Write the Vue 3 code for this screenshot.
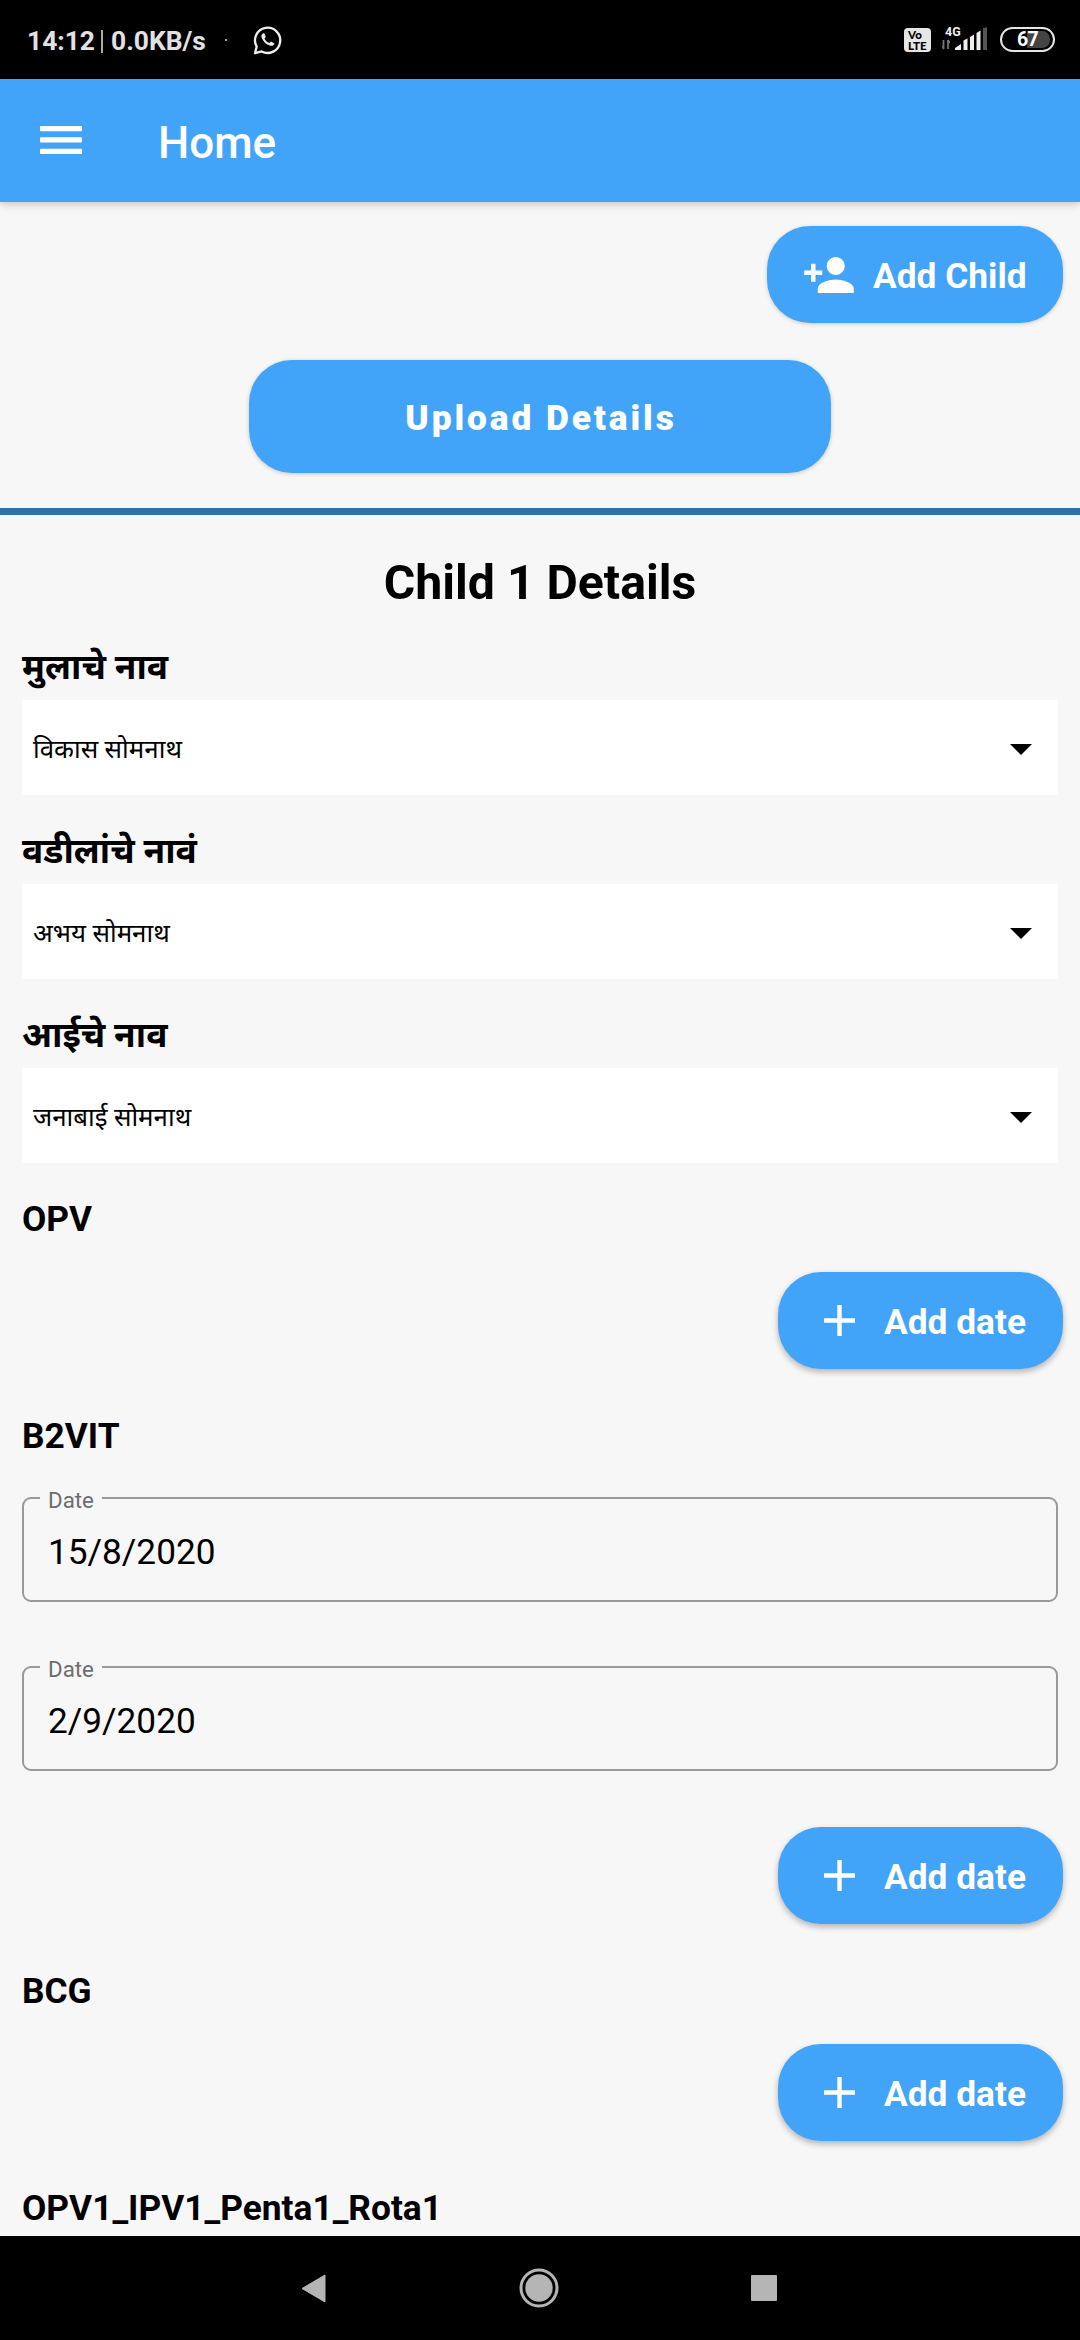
<script setup>
const names = [
  { label: 'मुलाचे नाव', value: 'विकास सोमनाथ' },
  { label: 'वडीलांचे नावं', value: 'अभय सोमनाथ' },
  { label: 'आईचे नाव', value: 'जनाबाई सोमनाथ' },
]
const vaccines = [
  { name: 'OPV', dates: [] },
  { name: 'B2VIT', dates: ['15/8/2020', '2/9/2020'] },
  { name: 'BCG', dates: [] },
]
</script>

<template>
  <div class="screen">
    <div class="status">
      <span class="clock">14:12</span>
      <span class="sep"></span>
      <span class="speed">0.0KB/s</span>
      <span class="dot"></span>
      <svg class="wa" width="30" height="30" viewBox="0 0 30 30">
        <path d="M2 28.2 3.7 21.6A12.6 12.6 0 1 1 8.6 26.4Z" fill="none" stroke="#eee" stroke-width="2.3" stroke-linejoin="round" />
        <path d="M10.2 8.2c-1.8 1-2.3 2.8-1.3 5 1.7 3.7 4.3 6.2 8 7.4 2.3.7 4-.2 4.6-2.2l-3.5-2-1.7 1.7c-2.2-.9-3.9-2.6-4.8-4.6l1.3-1.7-1.4-3.4Z" fill="#eee" />
      </svg>
      <span class="grow"></span>
      <span class="volte"><b>Vo</b><b>LTE</b></span>
      <svg class="signal" width="46" height="30" viewBox="0 0 46 30">
        <text x="3" y="11" class="net">4G</text>
        <path d="M1.5 15v9M.5 21l1.5 3M6 24v-9M7.5 18 6 15" stroke="#777" stroke-width="1.8" fill="none" />
        <path d="M13 25v-2l6-4v6ZM21.5 25V15.5l4-2V25ZM28 25V12l4-2.5V25ZM34.5 25V8l4-2.5V25Z" fill="#eee" />
        <path d="M41 25V3.5l4-1.500v23Z" fill="#555" />
      </svg>
      <span class="battery">67</span>
    </div>

    <header class="appbar">
      <svg width="42" height="29" viewBox="0 0 42 29" fill="#fff">
        <rect width="42" height="5.3" rx="1" /><rect y="11.3" width="42" height="5.3" rx="1" /><rect y="22.7" width="42" height="5.3" rx="1" />
      </svg>
      <h1>Home</h1>
    </header>

    <main>
      <button class="btn child">
        <svg width="54" height="54" viewBox="0 0 24 24" fill="#fff"><path d="M15 12c2.21 0 4-1.79 4-4s-1.79-4-4-4-4 1.79-4 4 1.79 4 4 4zm-9-2V7H4v3H1v2h3v3h2v-3h3v-2H6zm9 4c-2.67 0-8 1.34-8 4v2h16v-2c0-2.66-5.33-4-8-4z" /></svg>
        <span>Add Child</span>
      </button>
      <button class="btn upload"><span>Upload Details</span></button>
      <hr />
      <h2>Child 1 Details</h2>

      <section v-for="n in names" :key="n.label" class="name">
        <h3>{{ n.label }}</h3>
        <div class="select">
          <span>{{ n.value }}</span>
          <svg width="22" height="11" viewBox="0 0 22 11"><path d="M0 0h22L11 11Z" /></svg>
        </div>
      </section>

      <section v-for="v in vaccines" :key="v.name" class="vaccine">
        <h3>{{ v.name }}</h3>
        <fieldset v-for="d in v.dates" :key="d">
          <legend>Date</legend>
          <span>{{ d }}</span>
        </fieldset>
        <button class="btn date">
          <svg width="31" height="31" viewBox="0 0 31 31" fill="#fff"><path d="M13.3 0h4.4v13.3H31v4.4H17.7V31h-4.4V17.7H0v-4.4h13.3Z" /></svg>
          <span>Add date</span>
        </button>
      </section>
      <h3>OPV1_IPV1_Penta1_Rota1</h3>
    </main>

    <nav>
      <svg width="25" height="29" viewBox="0 0 25 29"><path d="M24 1v27L1 14.5Z" fill="#b5b5b5" stroke="#b5b5b5" stroke-linejoin="round" /></svg>
      <svg width="40" height="40" viewBox="0 0 40 40"><circle cx="20" cy="20" r="18" fill="none" stroke="#b5b5b5" stroke-width="3" /><circle cx="20" cy="20" r="13.7" fill="#b5b5b5" /></svg>
      <svg width="26" height="26" viewBox="0 0 26 26"><rect width="26" height="26" rx="1" fill="#b5b5b5" /></svg>
    </nav>
  </div>
</template>

<style>
body { background: #f7f7f7; }
</style>

<style scoped>
* { box-sizing: border-box; margin: 0; }
.screen {
  width: 1080px; height: 2340px; overflow: hidden;
  display: flex; flex-direction: column;
  background: #f7f7f7; color: #000;
  font-family: Roboto, "Noto Sans Devanagari", "Noto Sans", sans-serif;
}
.status {
  flex: none; height: 79px; padding: 0 25px 0 27px;
  display: flex; align-items: center;
  background: #000; color: #e2e2e2;
  font-size: 26.4px; font-weight: 700; line-height: 32px;
}
.clock { width: 74px; margin-top: 3px; }
.sep { width: 2px; height: 23px; margin-top: 3px; background: #aaa; }
.speed { width: 97px; margin: 2px 0 0 8px; }
.dot { width: 2px; height: 2px; margin-left: 17px; background: #aaa; }
.wa { margin-left: 26px; }
.grow { flex: 1; }
.volte {
  width: 27px; height: 24px; border-radius: 4px; background: #e6e6e6; color: #000;
  display: flex; flex-direction: column; padding: 1px 0 0 4px;
  font-family: Lato, sans-serif; font-size: 11.5px; line-height: 11px;
}
.volte b { font-weight: 900; }
.signal { margin-left: 11px; }
.net { font: 700 12.5px Roboto, sans-serif; fill: #eee; }
.battery {
  width: 55px; height: 25px; margin-left: 12px;
  border: 2.5px solid #e6e6e6; border-radius: 13px;
  background: linear-gradient(90deg, #000 50%, #444 50%);
  background-clip: content-box; padding: 2px 3px;
  display: flex; align-items: center; justify-content: center;
  font-size: 19.5px; letter-spacing: -.8px; line-height: 20px; color: #fff;
}
.appbar {
  flex: none; height: 123px; padding: 0 40px; z-index: 1;
  display: flex; align-items: center; gap: 76px;
  background: #42a4f9; color: #fff; box-shadow: 0 2px 8px rgba(0, 0, 0, .22);
}
.appbar h1 { font-size: 44px; font-weight: 500; line-height: 52px; margin-top: 4px; }
main { flex: 1; min-height: 0; overflow: hidden; display: flex; flex-direction: column; }
.btn {
  flex: none; border: 0; border-radius: 43px; height: 97px;
  display: flex; align-items: center;
  background: #42a4f9; color: #fff; font: 700 35.3px/42px Roboto, sans-serif;
  box-shadow: 0 3px 6px rgba(0, 0, 0, .28);
}
.btn span { margin-top: 3px; }
.child { width: 296px; margin: 24px 17px 0 auto; padding: 0 0 0 35px; gap: 17px; box-shadow: 0 1px 4px rgba(0, 0, 0, .18); }
.upload {
  width: 582px; height: 113px; margin: 37px auto 0; padding: 0 0 0 2px; justify-content: center;
  font-weight: 900; letter-spacing: 2.9px; box-shadow: 0 1px 4px rgba(0, 0, 0, .2);
}
hr { flex: none; height: 7px; margin-top: 35px; border: 0; background: #2f72aa; }
h2 { font-size: 48.2px; line-height: 56px; text-align: center; margin-top: 40px; }
h3 { flex: none; font-size: 35.3px; line-height: 42px; height: 42px; padding-left: 22px; white-space: nowrap; }
h2 + .name { margin-top: 35px; }
.name { height: 184px; flex: none; }
.select {
  height: 95px; margin: 12px 22px 0; padding: 4px 26px 0 11px;
  display: flex; align-items: center; justify-content: space-between;
  background: #fff; font-size: 25.9px;
}
.select span { margin-top: 4px; }
.vaccine { flex: none; display: flex; flex-direction: column; }
.date { width: 285px; margin: 32px 17px 46px auto; padding: 0 0 0 46px; gap: 29px; }
fieldset {
  height: 117px; margin: 28px 22px 24px; padding: 0 0 0 24px; min-width: 0;
  border: 2px solid #999; border-radius: 9px;
}
legend { padding: 4px 8px 0; margin-left: -8px; font-size: 22.3px; line-height: 22px; color: #6e6e6e; }
fieldset span { display: block; font-size: 35.2px; line-height: 42px; margin-top: 20px; }
nav {
  flex: none; height: 104px; padding: 0 303px 0 301px; background: #000;
  display: flex; align-items: center; justify-content: space-between;
}
</style>
